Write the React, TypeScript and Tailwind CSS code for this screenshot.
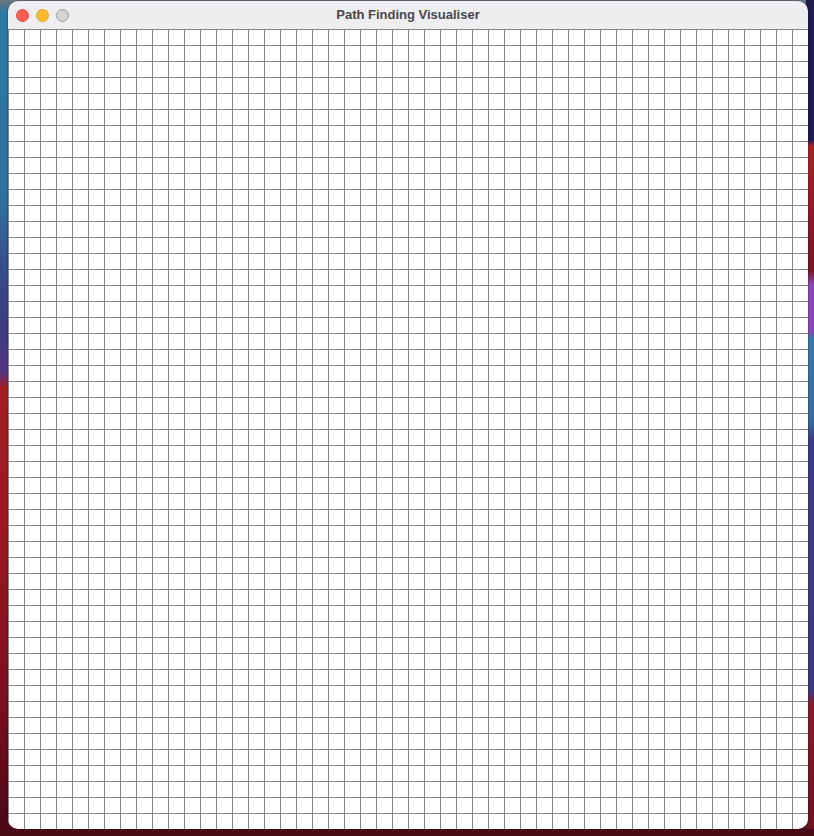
import React from "react";

const COLS = 50;
const ROWS = 50;

function TrafficLights() {
  return (
    <div className="absolute left-[8px] top-[8px] flex items-center gap-[7px]">
      <span className="h-[13px] w-[13px] rounded-full border border-[#e0443e] bg-[#fe5f57]" />
      <span className="h-[13px] w-[13px] rounded-full border border-[#dea123] bg-[#febc2e]" />
      <span className="h-[13px] w-[13px] rounded-full border border-[#9a9a9c] bg-[#d4d3d6]" />
    </div>
  );
}

function Grid() {
  const cells = Array.from({ length: COLS * ROWS });
  return (
    <div className="grid grid-cols-[repeat(50,16px)] grid-rows-[repeat(50,16px)] bg-white">
      {cells.map((_, i) => (
        <div key={i} className="border-l-[1.5px] border-t-[1.5px] border-[#858585]" />
      ))}
    </div>
  );
}

export default function App() {
  return (
    <div className="relative h-[836px] w-[814px] overflow-hidden bg-[linear-gradient(to_bottom,#6f767d_0px,#2b78a6_12px,#2e70a2_200px,#35508e_260px,#3d3b85_330px,#553582_372px,#a11e22_388px,#9a1a20_520px,#7a1020_700px,#4a0815_836px)]">
      <div className="absolute right-0 top-0 h-full w-[8px] bg-[linear-gradient(to_bottom,#1f1d50_0px,#1f1d50_140px,#a8222a_146px,#7a1422_270px,#8a48b8_285px,#8a48b8_332px,#3a7aa8_338px,#3a6aa0_420px,#3b3c86_440px,#3a3a80_690px,#8a1a2a_705px,#6a1020_836px)]" />
      <div className="absolute bottom-0 left-0 h-[7px] w-full bg-[#4a0a18]" />

      <div className="absolute left-[8px] top-[1px] w-[800px] overflow-hidden rounded-[10px] shadow-[0_0_0_0.5px_rgba(0,0,0,0.35)]">
        <div className="relative flex h-[28px] items-center justify-center bg-[#eeedf0]">
          <TrafficLights />
          <span className="font-['Liberation_Sans',Arial,sans-serif] text-[13px] font-bold text-[#48474c]">
            Path Finding Visualiser
          </span>
        </div>
        <Grid />
      </div>
    </div>
  );
}
